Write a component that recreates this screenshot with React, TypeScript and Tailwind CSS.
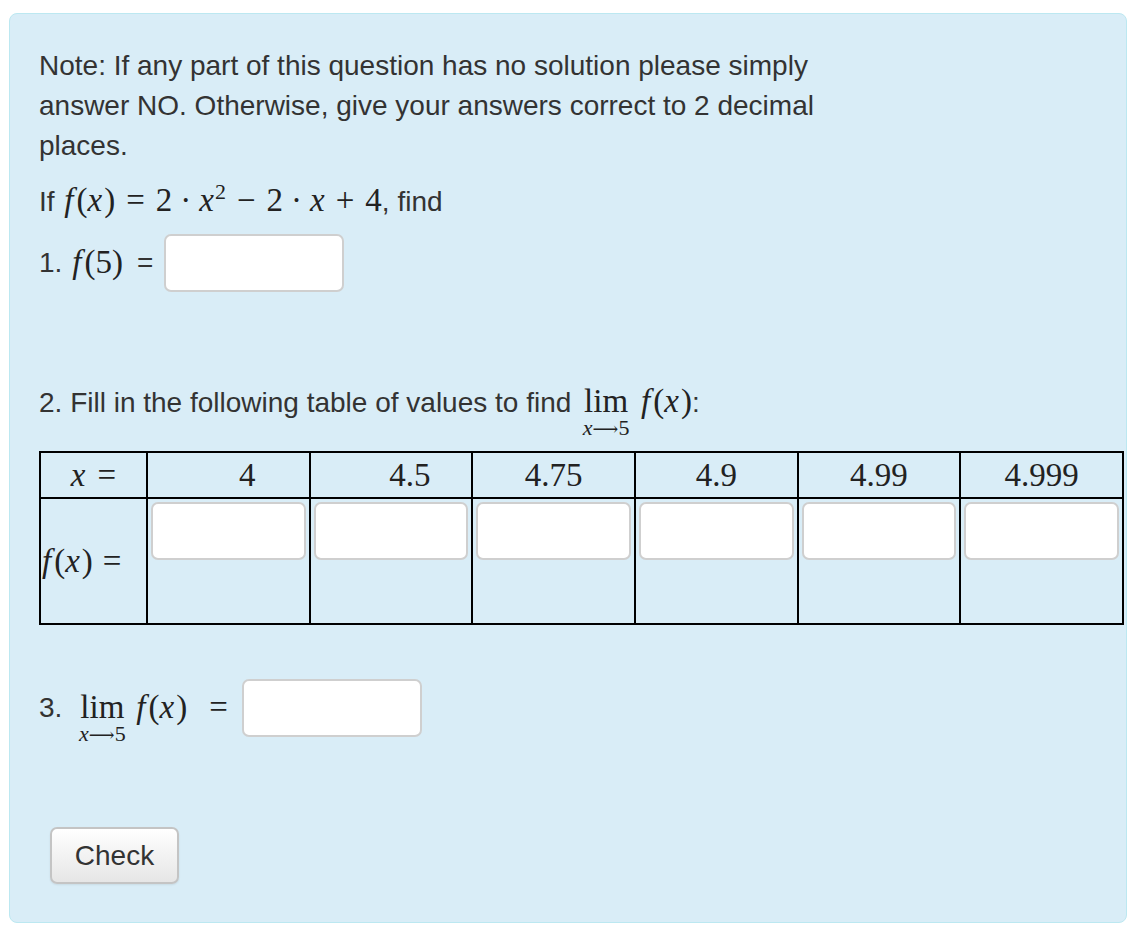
import React from "react";

// shift: the first two header values sit right of centre in the reference
const XS = [
  { v: "4", shift: true },
  { v: "4.5", shift: true },
  { v: "4.75", shift: false },
  { v: "4.9", shift: false },
  { v: "4.99", shift: false },
  { v: "4.999", shift: false },
];

// ── Math bits ──────────────────────────────────────────────────────────────────

function M({ children, className = "" }: { children: React.ReactNode; className?: string }) {
  return (
    <span className={`font-['Liberation_Serif',serif] text-[33px] text-[#222] whitespace-nowrap ${className}`}>
      {children}
    </span>
  );
}

function I({ children }: { children: React.ReactNode }) {
  return <span className="italic">{children}</span>;
}

function Op({ children, wide = false }: { children: React.ReactNode; wide?: boolean }) {
  return <span className={wide ? "mx-[11px]" : "mx-[8px]"}>{children}</span>;
}

function Fx() {
  return (
    <>
      <I>f</I>
      <span className="ml-[3px]">(</span>
      <I>x</I>
      <span className="ml-[2px]">)</span>
    </>
  );
}

function Lim() {
  return (
    <span className="inline-flex w-[50px] flex-col items-center align-baseline -mb-[22px]">
      <span className="leading-[28px]">lim</span>
      <span className="mt-[3px] text-[22px] leading-[20px]">
        <I>x</I>
        <span className="font-['DejaVu_Serif',serif] text-[18px]">⟶</span>5
      </span>
    </span>
  );
}

function AnswerBox({ className = "" }: { className?: string }) {
  return (
    <input
      type="text"
      className={`h-[58px] rounded-[7px] border-2 border-[#cfcfcf] bg-white outline-none ${className}`}
    />
  );
}

// ── Page ───────────────────────────────────────────────────────────────────────

export default function App() {
  return (
    <div className="min-h-[938px] bg-white pl-[9px] pt-[13px] font-['Liberation_Sans',Arial,sans-serif] text-[28px] text-[#333]">
      <div className="w-[1118px] h-[910px] rounded-[8px] border border-[#bce8f1] bg-[#d9edf7] pl-[29px] pt-[32px]">

        {/* Note */}
        <p className="w-[800px] leading-[40px]">
          Note: If any part of this question has no solution please simply answer NO. Otherwise, give your answers correct to 2 decimal places.
        </p>

        {/* Function */}
        <div className="mt-[14px] h-[40px] leading-[40px] whitespace-nowrap">
          If{" "}
          <M className="ml-[2px]">
            <Fx />
            <Op wide>=</Op>2<Op>·</Op>
            <I>x</I>
            <sup className="text-[22px] ml-[1px] -top-[12px]">2</sup>
            <Op wide>−</Op>2<Op>·</Op>
            <I>x</I>
            <Op wide>+</Op>4
          </M>
          , find
        </div>

        {/* Q1 */}
        <div className="mt-[14px] flex h-[58px] items-center">
          <span>1.</span>
          <M className="ml-[10px]">
            <I>f</I>
            <span className="ml-[3px]">(5)</span>
          </M>
          <span className="ml-[14px]">=</span>
          <AnswerBox className="ml-[11px] w-[180px]" />
        </div>

        {/* Q2 */}
        <div className="mt-[89px] h-[40px] leading-[40px] whitespace-nowrap">
          2. Fill in the following table of values to find{" "}
          <M className="ml-[2px]">
            <Lim />
            <span className="ml-[10px]">
              <Fx />
            </span>
          </M>
          :
        </div>

        <table className="mt-[30px] w-[1085px] table-fixed border-collapse">
          <thead>
            <tr className="h-[46px]">
              <th className="w-[107px] border-2 border-black p-0 font-normal leading-none">
                <M>
                  <I>x</I>
                  <span className="ml-[12px]">=</span>
                </M>
              </th>
              {XS.map(({ v, shift }) => (
                <th
                  key={v}
                  className={`border-2 border-black p-0 font-normal leading-none ${shift ? "pl-[38px]" : ""}`}
                >
                  <M>{v}</M>
                </th>
              ))}
            </tr>
          </thead>
          <tbody>
            <tr className="h-[126px]">
              <td className="border-2 border-black p-0 align-middle leading-none">
                <M className="ml-[1px]">
                  <Fx />
                  <span className="ml-[10px]">=</span>
                </M>
              </td>
              {XS.map(({ v }) => (
                <td key={v} className="border-2 border-black px-[3px] pt-[3px] align-top">
                  <AnswerBox className="block w-full" />
                </td>
              ))}
            </tr>
          </tbody>
        </table>

        {/* Q3 */}
        <div className="mt-[54px] flex h-[58px] items-center">
          <span>3.</span>
          <M className="ml-[15px] flex items-baseline">
            <Lim />
            <span className="ml-[9px]">
              <Fx />
            </span>
            <span className="ml-[22px]">=</span>
          </M>
          <AnswerBox className="ml-[14px] w-[180px]" />
        </div>

        {/* Check */}
        <button className="ml-[11px] mt-[90px] h-[57px] w-[129px] rounded-[7px] border-2 border-[#c4c4c4] bg-gradient-to-b from-white to-[#e6e6e6] text-[28px] text-[#333] shadow-[0_1px_2px_rgba(0,0,0,0.08)]">
          Check
        </button>
      </div>
    </div>
  );
}
